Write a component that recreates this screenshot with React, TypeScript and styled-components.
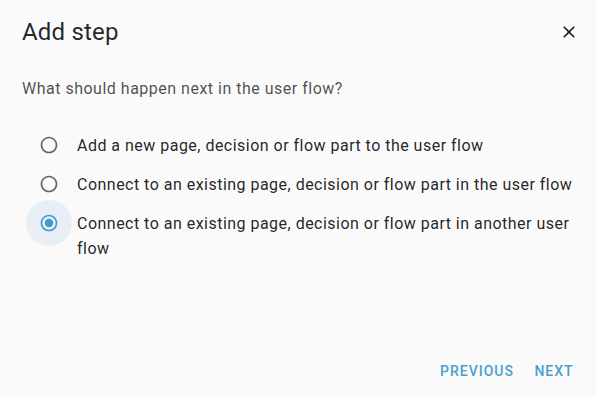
import { useState } from "react";
import styled, { createGlobalStyle } from "styled-components";

const GlobalStyle = createGlobalStyle`
  html, body {
    margin: 0;
    padding: 0;
    background: #fafafa;
  }
  * {
    box-sizing: border-box;
  }
`;

const Dialog = styled.div`
  width: 596px;
  height: 397px;
  display: flex;
  flex-direction: column;
  background: #fafafa;
  font-family: Roboto, "Liberation Sans", sans-serif;
  color: rgba(0, 0, 0, 0.87);
`;

const Header = styled.div`
  display: flex;
  align-items: center;
  justify-content: space-between;
  padding: 12px 7px 0 22px;
`;

const Title = styled.h2`
  margin: 0;
  font-size: 24px;
  font-weight: 400;
  line-height: 40px;
  letter-spacing: 0.2px;
`;

const IconButton = styled.button`
  width: 40px;
  height: 40px;
  display: flex;
  align-items: center;
  justify-content: center;
  padding: 0;
  border: none;
  border-radius: 50%;
  background: transparent;
  color: rgba(0, 0, 0, 0.87);
  cursor: pointer;
`;

const Content = styled.div`
  padding: 0 22px;
`;

const Question = styled.p`
  margin: 25px 0 0;
  font-size: 16px;
  line-height: 24px;
  letter-spacing: 0.5px;
  color: rgba(0, 0, 0, 0.7);
`;

const Options = styled.div`
  margin-top: 24px;
  display: flex;
  flex-direction: column;
`;

const Option = styled.label`
  display: flex;
  align-items: flex-start;
  cursor: pointer;
`;

const RadioWrap = styled.span<{ $focused?: boolean }>`
  position: relative;
  flex: none;
  width: 39px;
  height: 39px;
  margin-left: 7px;
  display: flex;
  align-items: center;
  justify-content: center;
  color: ${(p) => (p.$focused ? "#3d9ad0" : "rgba(0, 0, 0, 0.6)")};

  &::before {
    content: "";
    position: absolute;
    left: 50%;
    top: 50%;
    width: 46px;
    height: 46px;
    margin: -23px 0 0 -23px;
    border-radius: 50%;
    background: ${(p) => (p.$focused ? "#e7eff5" : "transparent")};
  }

  svg {
    position: relative;
  }
`;

const HiddenInput = styled.input`
  position: absolute;
  opacity: 0;
  width: 0;
  height: 0;
`;

const Label = styled.span`
  margin-left: 9px;
  padding-top: 7.5px;
  font-size: 16px;
  line-height: 25px;
  letter-spacing: 0.48px;
  color: rgba(0, 0, 0, 0.87);
`;

const Actions = styled.div`
  margin-top: auto;
  display: flex;
  justify-content: flex-end;
  padding: 0 10px 8px;
`;

const TextButton = styled.button`
  min-width: 64px;
  padding: 6px 8px;
  border: none;
  background: transparent;
  font-family: Roboto, "Liberation Sans", sans-serif;
  font-size: 14px;
  font-weight: 500;
  line-height: 24.5px;
  letter-spacing: 1px;
  text-transform: uppercase;
  color: #4a9fcf;
  cursor: pointer;
`;

const RadioIcon = ({ checked }: { checked: boolean }) => (
  <svg width="20" height="20" viewBox="0 0 24 24" fill="currentColor">
    <path d="M12 2C6.48 2 2 6.48 2 12s4.48 10 10 10 10-4.48 10-10S17.52 2 12 2zm0 18c-4.42 0-8-3.58-8-8s3.58-8 8-8 8 3.58 8 8-3.58 8-8 8z" />
    {checked && <circle cx="12" cy="12" r="5" />}
  </svg>
);

const CloseIcon = () => (
  <svg width="20" height="20" viewBox="0 0 24 24" fill="currentColor">
    <path d="M19 6.41 17.59 5 12 10.59 6.41 5 5 6.41 10.59 12 5 17.59 6.41 19 12 13.41 17.59 19 19 17.59 13.41 12z" />
  </svg>
);

const options = [
  "Add a new page, decision or flow part to the user flow",
  "Connect to an existing page, decision or flow part in the user flow",
  "Connect to an existing page, decision or flow part in another user flow",
];

const App = () => {
  const [selected, setSelected] = useState(2);

  return (
    <>
      <GlobalStyle />
      <Dialog>
        <Header>
          <Title>Add step</Title>
          <IconButton aria-label="close">
            <CloseIcon />
          </IconButton>
        </Header>
        <Content>
          <Question>What should happen next in the user flow?</Question>
          <Options>
            {options.map((text, i) => (
              <Option key={i}>
                <RadioWrap $focused={selected === i}>
                  <HiddenInput
                    type="radio"
                    name="next-step"
                    checked={selected === i}
                    onChange={() => setSelected(i)}
                  />
                  <RadioIcon checked={selected === i} />
                </RadioWrap>
                <Label>{text}</Label>
              </Option>
            ))}
          </Options>
        </Content>
        <Actions>
          <TextButton>Previous</TextButton>
          <TextButton>Next</TextButton>
        </Actions>
      </Dialog>
    </>
  );
};

export default App;
